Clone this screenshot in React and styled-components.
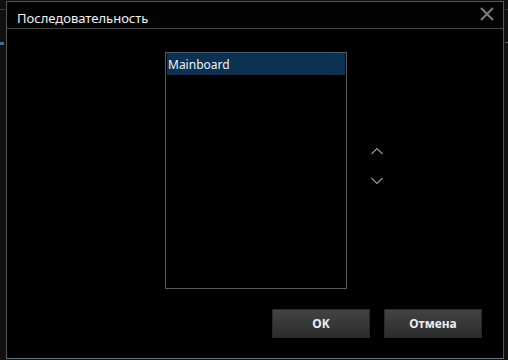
import React from "react";
import styled, { createGlobalStyle } from "styled-components";

const Global = createGlobalStyle`
  html, body { margin: 0; padding: 0; background: #101010; }
  body { width: 508px; height: 360px; overflow: hidden; font-family: "Noto Sans", "Open Sans", sans-serif; }
  #root { width: 508px; height: 360px; }
`;

const Desktop = styled.div`
  position: relative;
  width: 508px;
  height: 360px;
  box-sizing: border-box;
  padding: 1px 4px 1px 6px;
  background: #101010;
`;

const EdgeMark = styled.div`
  position: absolute;
  top: ${(p) => p.$top}px;
  left: ${(p) => (p.$side === "left" ? "0" : "auto")};
  right: ${(p) => (p.$side === "right" ? "0" : "auto")};
  width: ${(p) => p.$w}px;
  height: ${(p) => p.$h}px;
  background: ${(p) => p.$color};
`;

const Dialog = styled.div`
  width: 100%;
  height: 100%;
  box-sizing: border-box;
  border: 1px solid #575757;
  border-bottom-color: #5d7a86;
  background: #000;
  display: flex;
  flex-direction: column;
`;

const TitleBar = styled.div`
  height: 26px;
  border-bottom: 1px solid #444;
  display: flex;
  align-items: flex-end;
  justify-content: space-between;
  padding: 0 6px 0 10px;
  background: #030303;
`;

const Title = styled.div`
  color: #f2f2f2;
  font-size: 13px;
  line-height: 18px;
  padding-bottom: 1px;
`;

const CloseButton = styled.div`
  align-self: flex-start;
  margin-top: 2px;
  width: 20px;
  height: 20px;
  display: flex;
  align-items: center;
  justify-content: center;
`;

const Body = styled.div`
  flex: 1;
  display: flex;
  flex-direction: column;
  padding: 23px 21px 19px 158px;
`;

const Row = styled.div`
  display: flex;
  align-items: center;
`;

const ListBox = styled.div`
  width: 182px;
  height: 237px;
  box-sizing: border-box;
  border: 1px solid #5a5a5a;
  padding: 0 1px;
  background: #000;
`;

const ListItem = styled.div`
  height: 22px;
  display: flex;
  align-items: center;
  padding-left: 1px;
  font-size: 12px;
  color: #f4f4f4;
  background: ${(p) => (p.$selected ? "#0b3153" : "transparent")};
`;

const Arrows = styled.div`
  display: flex;
  flex-direction: column;
  gap: 22px;
  margin-left: 24px;
  margin-top: -10px;
`;

const ArrowBtn = styled.div`
  width: 12px;
  height: 8px;
  display: flex;
`;

const Footer = styled.div`
  margin-top: 20px;
  display: flex;
  justify-content: flex-end;
  gap: 14px;
`;

const Button = styled.div`
  width: 98px;
  height: 29px;
  box-sizing: border-box;
  border: 1px solid #2a2a2a;
  background: linear-gradient(#434343, #2c2c2c);
  color: #e9eef4;
  font-family: "Noto Sans", "Open Sans", sans-serif;
  font-weight: 700;
  font-size: 12px;
  display: flex;
  align-items: center;
  justify-content: center;
`;

const Chevron = ({ up }) => (
  <svg width="12" height="8" viewBox="0 0 12 8">
    <path
      d={up ? "M0.5 7 L6 1.5 L11.5 7" : "M0.5 1 L6 6.5 L11.5 1"}
      fill="none"
      stroke="#9a9a9a"
      strokeWidth="1.1"
    />
  </svg>
);

export default function App() {
  return (
    <>
      <Global />
      <Desktop>
        <EdgeMark $side="left" $top={9} $w={5} $h={1} $color="#3a3a3a" />
        <EdgeMark $side="left" $top={42} $w={4} $h={3} $color="#2f6fa8" />
        <EdgeMark $side="right" $top={9} $w={3} $h={1} $color="#3a3a3a" />
        <EdgeMark $side="right" $top={42} $w={3} $h={1} $color="#5a5a5a" />
        <Dialog>
          <TitleBar>
            <Title>Последовательность</Title>
            <CloseButton>
              <svg width="16" height="16" viewBox="0 0 16 16">
                <path d="M2 2 L14 14 M14 2 L2 14" stroke="#7a7a7a" strokeWidth="2.2" />
              </svg>
            </CloseButton>
          </TitleBar>
          <Body>
            <Row>
              <ListBox>
                <ListItem $selected>Mainboard</ListItem>
              </ListBox>
              <Arrows>
                <ArrowBtn><Chevron up /></ArrowBtn>
                <ArrowBtn><Chevron /></ArrowBtn>
              </Arrows>
            </Row>
            <Footer>
              <Button>OK</Button>
              <Button>Отмена</Button>
            </Footer>
          </Body>
        </Dialog>
      </Desktop>
    </>
  );
}
